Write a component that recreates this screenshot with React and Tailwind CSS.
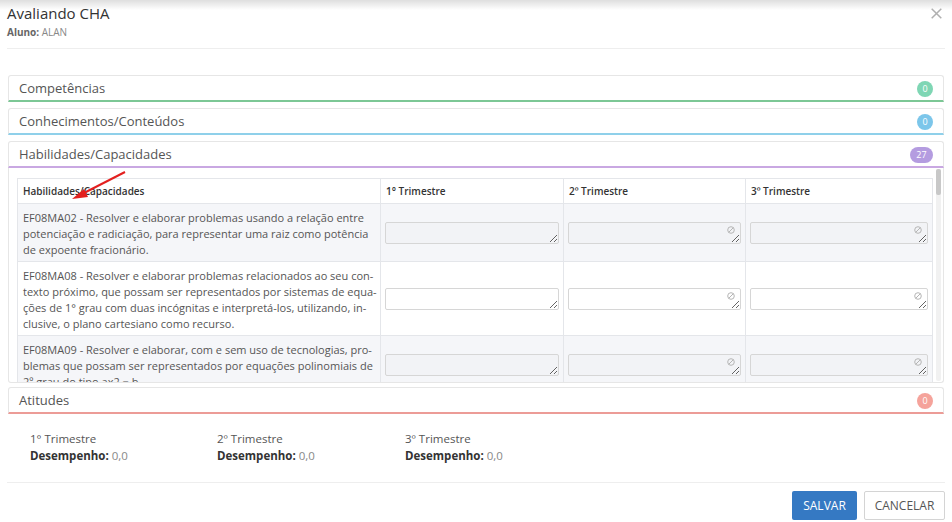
const panels = [
  { title: "Competências", count: "0", line: "border-b-[#7cc795]", badge: "bg-[#7fd6b4]" },
  { title: "Conhecimentos/Conteúdos", count: "0", line: "border-b-[#8fd0ea]", badge: "bg-[#7cc6ea]" },
];

const rows = [
  {
    lines: [
      "EF08MA02 - Resolver e elaborar problemas usando a relação entre",
      "potenciação e radiciação, para representar uma raiz como potência",
      "de expoente fracionário.",
    ],
    shade: true,
    h: "h-[58px]",
  },
  {
    lines: [
      "EF08MA08 - Resolver e elaborar problemas relacionados ao seu con-",
      "texto próximo, que possam ser representados por sistemas de equa-",
      "ções de 1° grau com duas incógnitas e interpretá-los, utilizando, in-",
      "clusive, o plano cartesiano como recurso.",
    ],
    shade: false,
    h: "h-[74px]",
  },
  {
    lines: [
      "EF08MA09 - Resolver e elaborar, com e sem uso de tecnologias, pro-",
      "blemas que possam ser representados por equações polinomiais de",
      "2º grau do tipo ax2 = b.",
    ],
    shade: true,
    h: "h-[58px]",
  },
];

const NoEntry = () => (
  <svg width="8" height="8" viewBox="0 0 8 8" className="absolute right-[6px] top-[4px]">
    <circle cx="4" cy="4" r="3.3" fill="none" stroke="#b5b5b5" strokeWidth="1" />
    <line x1="1.8" y1="6.2" x2="6.2" y2="1.8" stroke="#b5b5b5" strokeWidth="1" />
  </svg>
);

const Cell = ({ shade, locked }) => (
  <td className="border border-[#e4e6ea] px-[4px] align-middle">
    <div className="relative">
      <textarea
        className={`block h-[22px] w-full rounded-[2px] border border-[#d6d6d6] text-[11px] outline-none ${shade ? "bg-[#f2f3f6]" : "bg-white"}`}
      />
      {locked && <NoEntry />}
    </div>
  </td>
);

const Header = ({ title, count, line, badge, pill }) => (
  <div className={`flex h-[27px] items-center justify-between border border-[#e6e6e6] border-b-2 ${line} rounded-t-[3px] pl-[10px] pr-[10px] pt-[1px]`}>
    <span className="text-[13px] text-[#555]">{title}</span>
    <span className={`flex h-[16px] items-center justify-center rounded-full text-[9px] text-white ${pill ? "w-[23px]" : "w-[16px]"} ${badge}`}>{count}</span>
  </div>
);

export default function App() {
  return (
    <div className="relative h-[522px] w-[952px] overflow-hidden bg-white font-['Open_Sans',sans-serif] text-[#555]">
      <div className="pointer-events-none absolute left-0 right-0 top-0 h-[10px] bg-linear-to-b from-[rgba(0,0,0,0.13)] to-transparent" />

      {/* modal header */}
      <div className="relative mx-[7px] h-[49px] border-b border-[#eeeeee]">
        <h1 className="pt-[3px] text-[15px] leading-[20px] text-[#333]">Avaliando CHA</h1>
        <p className="mt-[3px] text-[10px] leading-[12px] text-[#888]">
          <b className="font-bold text-[#666]">Aluno:</b> ALAN
        </p>
        <svg width="11" height="11" viewBox="0 0 11 11" className="absolute right-[3px] top-[8px]">
          <path d="M0.7 0.7 L10.3 10.3 M10.3 0.7 L0.7 10.3" stroke="#b0b0b0" strokeWidth="1.5" />
        </svg>
      </div>

      {/* panels */}
      <div className="mx-[8px] mt-[26px] flex flex-col">
        {panels.map((p) => (
          <div key={p.title} className="mb-[6px]">
            <Header {...p} />
          </div>
        ))}

        <div className="mb-[4px]">
          <Header title="Habilidades/Capacidades" count="27" line="border-b-[#c9a8e2]" badge="bg-[#b49ce0]" pill />
          <div className="flex h-[215px] border border-t-0 border-[#e6e6e6] rounded-b-[3px]">
            <div className="w-[924px] overflow-hidden pl-[8px] pt-[10px]">
              <table className="w-[915px] table-fixed border-collapse text-[11px] leading-[16px] text-[#555]">
                <colgroup>
                  <col className="w-[363px]" />
                  <col className="w-[183px]" />
                  <col className="w-[182px]" />
                  <col className="w-[187px]" />
                </colgroup>
                <thead>
                  <tr className="h-[25px] text-left text-[10px] font-semibold text-[#333]">
                    <th className="border border-[#e4e6ea] px-[5px] font-semibold">Habilidades/Capacidades</th>
                    <th className="border border-[#e4e6ea] px-[5px] font-semibold">1° Trimestre</th>
                    <th className="border border-[#e4e6ea] px-[5px] font-semibold">2º Trimestre</th>
                    <th className="border border-[#e4e6ea] px-[5px] font-semibold">3º Trimestre</th>
                  </tr>
                </thead>
                <tbody>
                  {rows.map((r, i) => (
                    <tr key={i} className={`${r.h} ${r.shade ? "bg-[#f5f6f9]" : "bg-white"}`}>
                      <td className="border border-[#e4e6ea] px-[5px] pt-[6px] pb-[3px] align-top">
                        {r.lines.map((l) => (
                          <div key={l} className="whitespace-nowrap">{l}</div>
                        ))}
                      </td>
                      <Cell shade={r.shade} />
                      <Cell shade={r.shade} locked />
                      <Cell shade={r.shade} locked />
                    </tr>
                  ))}
                </tbody>
              </table>
            </div>
            <div className="ml-[3px] mt-[1px] mb-[1px] w-[5px] rounded-[2px] bg-[#f1f1f1]">
              <div className="h-[26px] w-[5px] rounded-[2px] bg-[#c8c8c8]" />
            </div>
          </div>
        </div>

        <Header title="Atitudes" count="0" line="border-b-[#ec9c97]" badge="bg-[#f5a39b]" />
      </div>

      {/* results */}
      <div className="ml-[30px] mt-[16px] flex text-[11.5px] leading-[17px]">
        {["1° Trimestre", "2º Trimestre", "3º Trimestre"].map((t, i) => (
          <div key={t} className={i === 0 ? "w-[187px]" : "w-[188px]"}>
            <div className="text-[#555]">{t}</div>
            <div className="text-[#888]">
              <b className="font-bold text-[#333]">Desempenho:</b> 0,0
            </div>
          </div>
        ))}
      </div>

      {/* footer */}
      <div className="mx-[7px] mt-[18px] flex justify-end gap-[7px] border-t border-[#eeeeee] pt-[8px]">
        <button className="h-[29px] w-[65px] rounded-[2px] bg-[#3579c3] text-[12px] text-white">SALVAR</button>
        <button className="h-[29px] w-[81px] rounded-[2px] border border-[#d4d4d4] bg-white text-[12px] text-[#555]">CANCELAR</button>
      </div>

      {/* annotation arrow */}
      <svg className="pointer-events-none absolute left-0 top-0" width="952" height="522">
        <line x1="125" y1="172" x2="82" y2="194" stroke="#e3201f" strokeWidth="2" />
        <polygon points="72,199 84,189 88,197" fill="#e3201f" />
      </svg>
    </div>
  );
}
